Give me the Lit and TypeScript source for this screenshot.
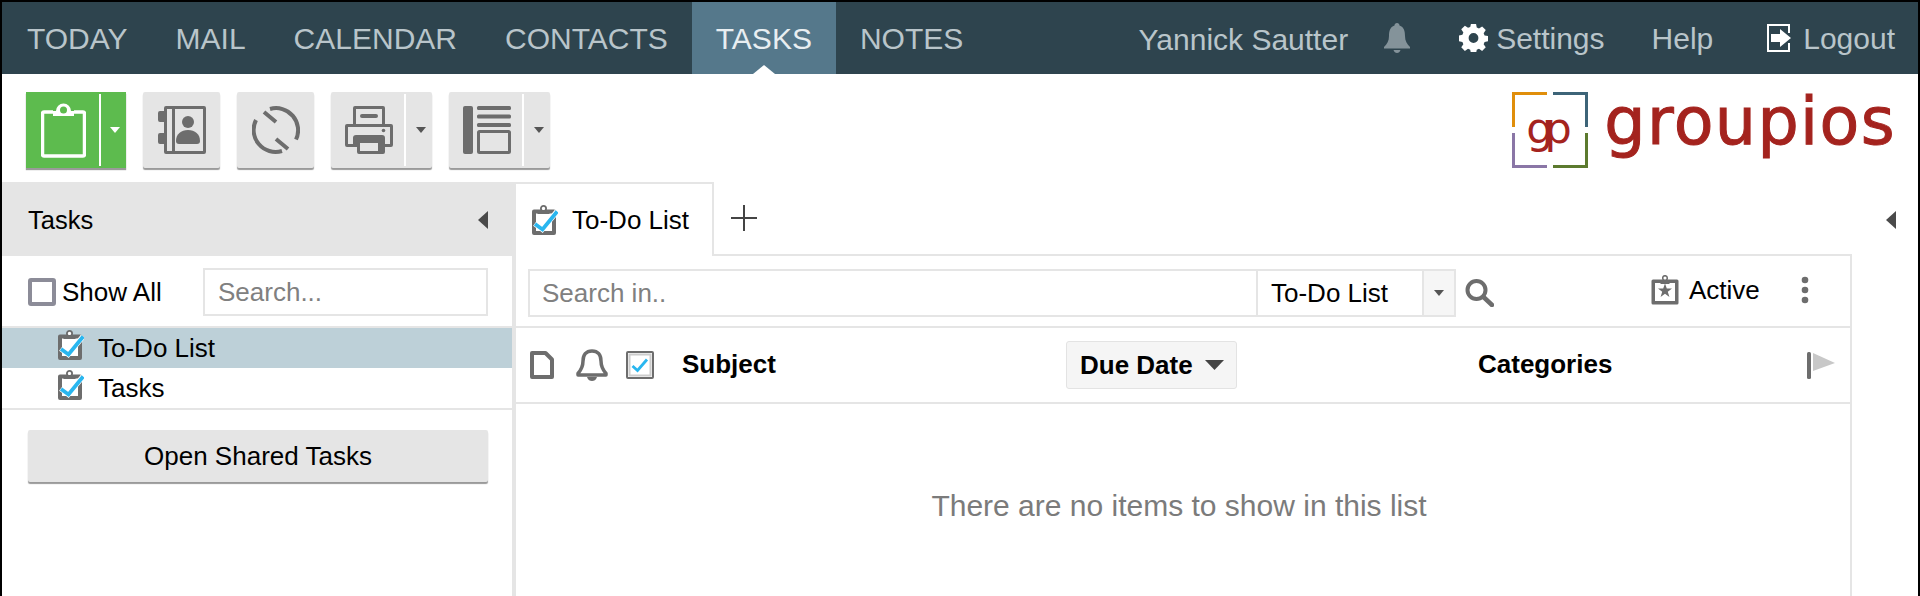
import { LitElement, html, css } from "lit";
import { customElement } from "lit/decorators.js";

const clipCheck = html`<svg class="cc" width="26" height="30" viewBox="0 0 26 30"><path d="M2 6.500h20v21.500H2z" fill="#fff" stroke="#6d6d6d" stroke-width="4" stroke-linejoin="round"/><circle cx="11.500" cy="3.500" r="2.600" fill="#fff" stroke="#6d6d6d" stroke-width="1.800"/><rect x="5.500" y="5" width="12" height="4" fill="#6d6d6d"/><path d="M2.800 18.500l7.500 5.800L25 6.500" fill="none" stroke="#fff" stroke-width="5.500"/><path d="M3 19l7.500 5.500L25.200 6.500" fill="none" stroke="#29b6ef" stroke-width="3.800"/></svg>`;

const caret = (c: string) => html`<svg class="caret" width="10" height="6" viewBox="0 0 10 6"><path d="M0 0h10L5 6z" fill="${c}"/></svg>`;

@customElement("app-root")
export class AppRoot extends LitElement {
  static styles = css`
    :host { display: block; height: 596px; overflow: hidden; box-sizing: border-box; background: #fff;
      border: solid #000; border-width: 2px 2px 0 2px; font-family: "Liberation Sans", Arial, sans-serif; font-size: 26px; color: #000; }
    svg { display: block; flex: none; }
    .nav { height: 72px; background: #2e444e; display: flex; align-items: stretch; color: #b9c5ca; font-size: 30px; padding-left: 1px; }
    .tab { display: flex; align-items: center; padding: 2px 24px 0; position: relative; }
    .tab.on { background: #55788b; color: #e8eef1; }
    .tab.on::after { content: ""; position: absolute; left: 50%; bottom: 0; margin-left: -11px; border: solid transparent; border-width: 0 11px 9px; border-bottom-color: #fff; }
    .navr { margin-left: auto; display: flex; align-items: center; padding: 2px 23px 0 0; }
    .navr span { display: block; }
    .user { margin-right: 36px; padding-top: 2px; }
    .bell { margin-right: 49px; margin-top: -2px; }
    .gear { margin-right: 8px; margin-top: -2px; }
    .help { margin: 0 54px 0 47px; }
    .logout { margin-right: 12px; margin-top: -2px; }
    .toolbar { height: 108px; display: flex; padding: 18px 22px 0 24px; box-sizing: border-box; }
    .btn { height: 76px; background: #e5e5e5; border-radius: 2px; box-shadow: 0 2px 1px #9a9a9a; display: flex; align-items: center; margin-right: 17px; box-sizing: border-box; }
    .btn.single { width: 77px; justify-content: center; }
    .btn.drop { width: 101px; padding-left: 14px; }
    .btn.green { background: #5dbb4e; width: 100px; padding-left: 15px; margin-right: 17px; border-radius: 0; }
    .btn .div { width: 2px; height: 72px; background: #fff; margin-left: 11px; margin-right: 10px; }
    .btn.green .div { margin-left: 13px; margin-right: 9px; }
    .logo { margin-left: auto; display: flex; height: 76px; }
    .mark { position: relative; width: 76px; height: 76px; }
    .corner { position: absolute; width: 32px; height: 32px; border: 0 solid; }
    .tl { left: 0; top: 0; border-width: 3px 0 0 3px; border-color: #e08e0b; }
    .tr { right: 0; top: 0; border-width: 3px 3px 0 0; border-color: #3d6478; }
    .bl { left: 0; bottom: 0; border-width: 0 0 3px 3px; border-color: #8a76a6; }
    .br { right: 0; bottom: 0; border-width: 0 3px 3px 0; border-color: #5c7a2e; }
    .gp { position: absolute; left: 14px; top: 6px; font: 43px/60px "DejaVu Sans", sans-serif; letter-spacing: -9px; color: #a4231e; }
    .word { font: 65px/76px "DejaVu Sans", sans-serif; color: #a4231e; margin-left: 16px; letter-spacing: 1.400px; margin-top: -8px; -webkit-text-stroke: 1px #a4231e; }
    .main { display: flex; height: 414px; }
    .side { width: 510px; flex: none; border-right: 4px solid #e5e5e5; }
    .head { height: 74px; background: #e5e5e5; margin-right: -4px; display: flex; align-items: center; justify-content: space-between; padding: 2px 28px 0 26px; box-sizing: border-box; font-size: 25.500px; }
    .filter { height: 70px; display: flex; align-items: center; padding: 2px 24px 0 26px; justify-content: flex-start; box-sizing: border-box; }
    .cb { width: 28px; height: 28px; box-sizing: border-box; border: 4px solid #8c8c98; border-radius: 3px; margin-right: 6px; flex: none; background: #fff; }
    .input { border: 2px solid #e5e5e5; height: 48px; box-sizing: border-box; display: flex; align-items: center; color: #808080; background: #fff; }
    .filter .input { width: 285px; margin-left: auto; padding-left: 13px; }
    .list { border-top: 2px solid #e5e5e5; border-bottom: 2px solid #e5e5e5; }
    .item { height: 40px; display: flex; align-items: center; padding-left: 56px; }
    .item .cc { margin-right: 14px; margin-top: -7px; }
    .item.on { background: #bdd0d8; }
    .open { margin: 20px 24px 0 26px; height: 52px; background: #e5e5e5; border-radius: 2px; box-shadow: 0 2px 1px #9a9a9a; display: flex; align-items: center; justify-content: center; }
    .right { width: 1336px; flex: none; }
    .tabs { height: 74px; display: flex; align-items: center; }
    .dtab { width: 198px; height: 74px; box-sizing: border-box; border: solid #e5e5e5; border-width: 2px 2px 0 0; display: flex; align-items: center; padding-left: 16px; gap: 14px; background: #fff; }
    .tabline { flex: 1; border-bottom: 2px solid #e5e5e5; padding-left: 17px; display: flex; align-items: center; box-sizing: border-box; height: 74px; }
    .body { border-right: 2px solid #e5e5e5; height: 340px; box-sizing: border-box; }
    .sbar { height: 72px; display: flex; align-items: center; padding: 4px 0 0 12px; box-sizing: border-box; border-bottom: 2px solid #e5e5e5; }
    .si { width: 730px; padding-left: 12px; }
    .sel { width: 166px; color: #000; padding-left: 13px; border-left: 0; }
    .seld { width: 32px; border-left: 0; background: #f6f6f6; justify-content: center; margin-right: 9px; }
    .act { margin-left: 157px; margin-right: 10px; margin-bottom: 6px; }
    .acts { margin-bottom: 6px; }
    .dots { margin-left: 41px; margin-bottom: 6px; }
    .cols { display: flex; align-items: center; border-bottom: 2px solid #e5e5e5; box-sizing: border-box; height: 76px; font-weight: 700; padding-left: 14px; }
    .subj { margin-left: 28px; width: 94px; margin-bottom: 1px; }
    .due { width: 171px; height: 48px; box-sizing: border-box; background: #f5f5f5; border: 1px solid #e3e3e3; border-radius: 3px; display: flex; align-items: center; padding-left: 13px; gap: 12px; margin-left: 290px; }
    .cat { margin-left: 241px; margin-bottom: 1px; }
    .flag { margin-left: auto; margin-right: 15px; }
    .ic1 { margin-left: 22px; }
    .ic2 { margin-left: 18px; }
    .empty { text-align: center; color: #7b7b7b; padding: 85px 8px 0 0; font-size: 30px; }
    .collapse { flex: 1; display: flex; justify-content: flex-end; padding: 29px 22px 0 0; }
  `;

  render() {
    return html`
      <div class="nav">
        <div class="tab">TODAY</div><div class="tab">MAIL</div><div class="tab">CALENDAR</div><div class="tab">CONTACTS</div><div class="tab on">TASKS</div><div class="tab">NOTES</div>
        <div class="navr">
          <span class="user">Yannick Sautter</span>
          <svg class="bell" width="26" height="30" viewBox="0 0 26 30"><path d="M13 0c1.500 0 2.500 1 2.500 2.500C20 4 21 8 21 13c0 5 2 8 5 11v1.500H0V24c3-3 5-6 5-11 0-5 1-9 5.500-10.500C10.500 1 11.500 0 13 0zM9.500 27h7c-.5 2-2 3-3.500 3s-3-1-3.500-3z" fill="#84939a"/></svg>
          <svg class="gear" width="29" height="28" viewBox="0 0 24 24"><path fill="#fff" fill-rule="evenodd" d="M9.800 0h4.400l.6 3.100 1.900.8 2.700-1.800 3.100 3.100-1.800 2.700.8 1.900 3 .6v4.400l-3 .6-.8 1.900 1.800 2.700-3.100 3.100-2.700-1.800-1.900.8-.6 3H9.800l-.6-3-1.900-.8-2.700 1.800-3.100-3.100 1.800-2.700-.8-1.900-3-.6V9.800l3-.6.8-1.900-1.800-2.700 3.100-3.100 2.700 1.800 1.900-.8zM12 7.800a4.200 4.200 0 1 0 0 8.400 4.200 4.200 0 0 0 0-8.400z"/></svg>
          <span>Settings</span><span class="help">Help</span>
          <svg class="logout" width="24" height="28" viewBox="0 0 24 28"><path d="M22 9V1H1v26h21v-8" fill="none" stroke="#fff" stroke-width="2"/><path d="M4 10h9V5l11 9-11 9v-5H4z" fill="#fff"/></svg>
          <span>Logout</span>
        </div>
      </div>
      <div class="toolbar">
        <div class="btn green">
          <svg width="45" height="56" viewBox="0 0 45 56"><path d="M12 10H3a1.500 1.500 0 0 0-1.500 1.500v41A1.500 1.500 0 0 0 3 54h39a1.500 1.500 0 0 0 1.500-1.500v-41A1.500 1.500 0 0 0 42 10h-9" fill="none" stroke="#fff" stroke-width="3.500"/><path d="M12 14v-5h3a7.500 7.500 0 1 1 15 0h3v5z" fill="#fff"/><circle cx="22.500" cy="8" r="3.500" fill="#5dbb4e"/></svg>
          <div class="div"></div>${caret("#fff")}
        </div>
        <div class="btn single"><svg width="48" height="48" viewBox="0 0 48 48"><path d="M6 2a2 2 0 0 1 2-2h38a2 2 0 0 1 2 2v44a2 2 0 0 1-2 2H8a2 2 0 0 1-2-2v-8H2a2 2 0 0 1-2-2v-7a2 2 0 0 1 2-2h4V16H2a2 2 0 0 1-2-2V7a2 2 0 0 1 2-2h4zM14 3H9v42h5zM45 3H17v42h28z" fill="#6d6d6d" fill-rule="evenodd"/><circle cx="30" cy="16" r="6" fill="#6d6d6d"/><path d="M18 35c0-7 5-11 12-11s12 4 12 11c0 2-1 3-3 3H21c-2 0-3-1-3-3z" fill="#6d6d6d"/></svg></div>
        <div class="btn single"><svg width="48" height="48" viewBox="0 0 48 48" fill="none" stroke="#6d6d6d" stroke-width="4"><path d="M18 3A22 22 0 0 1 44 33.500"/><path d="M30 45A22 22 0 0 1 4 14"/><path d="M12 6l12 10M24 33l12 10"/></svg></div>
        <div class="btn drop"><svg width="48" height="48" viewBox="0 0 48 48"><path d="M8 18V2a2 2 0 0 1 2-2h28a2 2 0 0 1 2 2v16h6a2 2 0 0 1 2 2v19a2 2 0 0 1-2 2h-6v5a2 2 0 0 1-2 2H14a2 2 0 0 1-2-2v-5H2a2 2 0 0 1-2-2V20a2 2 0 0 1 2-2zM11 3v15h26V3zM3 21v17h5v-6a3 3 0 0 1 3-3h26a3 3 0 0 1 3 3v6h5V21zM15 37v8h18v-8z" fill="#6d6d6d" fill-rule="evenodd"/><rect x="15" y="8" width="18" height="4" rx="2" fill="#6d6d6d"/><circle cx="38.500" cy="24.500" r="1.800" fill="#6d6d6d"/></svg><div class="div"></div>${caret("#555")}</div>
        <div class="btn drop"><svg width="48" height="48" viewBox="0 0 48 48" fill="#6d6d6d"><rect x="0" y="0" width="10" height="48" rx="2"/><rect x="14" y="0" width="34" height="4" rx="1.500"/><rect x="14" y="8.500" width="34" height="4" rx="1.500"/><rect x="14" y="17" width="34" height="4" rx="1.500"/><rect x="15.500" y="25.500" width="31" height="21" rx="1" fill="none" stroke="#6d6d6d" stroke-width="3"/></svg><div class="div"></div>${caret("#555")}</div>
        <div class="logo">
          <div class="mark"><div class="corner tl"></div><div class="corner tr"></div><div class="corner bl"></div><div class="corner br"></div><div class="gp">gp</div></div>
          <div class="word">groupios</div>
        </div>
      </div>
      <div class="main">
        <div class="side">
          <div class="head"><span>Tasks</span><svg width="10" height="18" viewBox="0 0 10 18"><path d="M10 0v18L0 9z" fill="#4a4a4a"/></svg></div>
          <div class="filter"><div class="cb"></div><span>Show All</span><div class="input">Search...</div></div>
          <div class="list">
            <div class="item on">${clipCheck}<span>To-Do List</span></div>
            <div class="item">${clipCheck}<span>Tasks</span></div>
          </div>
          <div class="open">Open Shared Tasks</div>
        </div>
        <div class="right">
          <div class="tabs">
            <div class="dtab">${clipCheck}<span>To-Do List</span></div>
            <div class="tabline"><svg width="26" height="26" viewBox="0 0 26 26"><path d="M13 0v26M0 13h26" stroke="#444" stroke-width="2"/></svg></div>
          </div>
          <div class="body">
            <div class="sbar">
              <div class="input si">Search in..</div>
              <div class="input sel">To-Do List</div>
              <div class="input seld">${caret("#555")}</div>
              <svg width="29" height="28" viewBox="0 0 29 28" fill="none" stroke="#6d6d6d"><circle cx="11.500" cy="11" r="9" stroke-width="4"/><path d="M18.500 18l8.500 8" stroke-width="4.500" stroke-linecap="round"/></svg>
              <svg class="act" width="28" height="30" viewBox="0 0 28 30"><path d="M2 4.500h24a1.500 1.500 0 0 1 1.500 1.500v22a1.500 1.500 0 0 1-1.500 1.500H2A1.500 1.500 0 0 1 .5 28V6A1.500 1.500 0 0 1 2 4.500z" fill="#6d6d6d"/><rect x="4" y="8" width="20" height="18" fill="#fff"/><circle cx="14" cy="3" r="2.300" fill="#fff" stroke="#6d6d6d" stroke-width="1.500"/><rect x="9.500" y="5" width="9" height="4" fill="#6d6d6d"/><path d="M14 8.500l1.800 5h5.200l-4.200 3.200 1.600 5.300L14 18.800 9.600 22l1.600-5.300L7 13.500h5.200z" fill="#6d6d6d"/></svg>
              <span class="acts">Active</span>
              <svg class="dots" width="8" height="28" viewBox="0 0 8 28" fill="#6d6d6d"><circle cx="4" cy="4" r="3.300"/><circle cx="4" cy="14" r="3.300"/><circle cx="4" cy="24" r="3.300"/></svg>
            </div>
            <div class="cols">
              <svg width="24" height="28" viewBox="0 0 24 28"><path d="M2 2h13.500L22 8.500V26H2z" fill="#fff" stroke="#6d6d6d" stroke-width="4" stroke-linejoin="round"/></svg>
              <svg class="ic1" width="32" height="32" viewBox="0 0 32 32"><path d="M16 2c6 0 9 4 9 10 0 6 2 9 5 12.500V26H2v-1.500C5 21 7 18 7 12 7 6 10 2 16 2z" fill="#fff" stroke="#6d6d6d" stroke-width="3.500" stroke-linejoin="round"/><path d="M11 28h10c-1 3-3 4-5 4s-4-1-5-4z" fill="#6d6d6d"/></svg>
              <svg class="ic2" width="28" height="28" viewBox="0 0 28 28"><rect x="1" y="1" width="26" height="26" rx="1" fill="#fff" stroke="#6d6d6d" stroke-width="2"/><rect x="3.500" y="3.500" width="21" height="21" fill="none" stroke="#ccc" stroke-width="2"/><path d="M6.500 15l5 4.500 9.500-11" fill="none" stroke="#29b6ef" stroke-width="2.800"/></svg>
              <span class="subj">Subject</span>
              <div class="due"><span>Due Date</span><svg width="19" height="10" viewBox="0 0 19 10"><path d="M0 0h19L9.500 10z" fill="#444"/></svg></div>
              <span class="cat">Categories</span>
              <svg class="flag" width="28" height="28" viewBox="0 0 28 28"><rect x="0" y="1" width="4" height="27" rx="1.500" fill="#6d6d6d"/><path d="M6 2l22 10L6 20z" fill="#c8c8c8"/></svg>
            </div>
            <div class="empty">There are no items to show in this list</div>
          </div>
        </div>
        <div class="collapse"><svg width="10" height="18" viewBox="0 0 10 18"><path d="M10 0v18L0 9z" fill="#4a4a4a"/></svg></div>
      </div>
    `;
  }
}
